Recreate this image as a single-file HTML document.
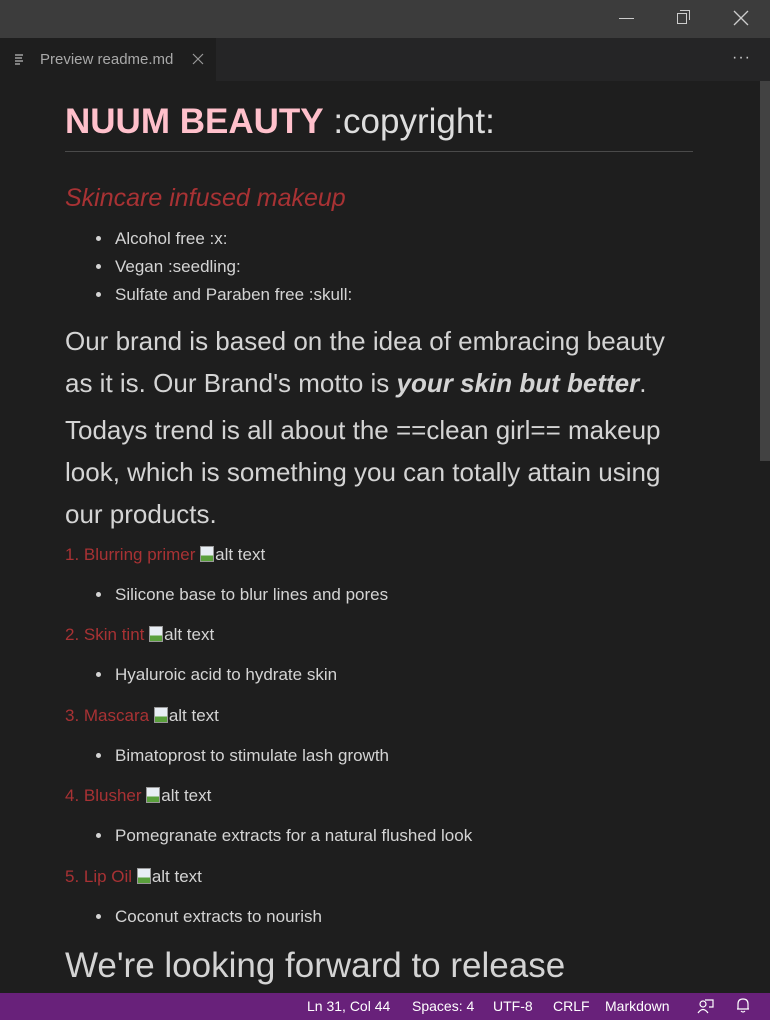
<!DOCTYPE html>
<html><head><meta charset="utf-8"><style>
body{margin:0;width:770px;height:1020px;background:#1e1e1e;overflow:hidden;position:relative;font-family:"Liberation Sans",sans-serif;color:#d4d4d4}
.a{position:absolute;white-space:nowrap}
.t{line-height:1}
.red{color:#a83234}
.dot{position:absolute;width:5px;height:5px;border-radius:50%;background:#d4d4d4}
.img{display:inline-block;width:14px;height:16px;vertical-align:-2px;margin-right:1px;background:linear-gradient(#e8eef4 60%,#5aa03c 60%);border:1px solid #999;box-sizing:border-box}
</style></head><body>
<div class="a" style="left:0;top:0;width:770px;height:38px;background:#3c3c3c"></div>
<div class="a" style="left:619px;top:18px;width:15px;height:1px;background:#ccc"></div>
<div class="a" style="left:677px;top:13px;width:10px;height:11px;border:1px solid #ccc;box-sizing:border-box"></div>
<div class="a" style="left:680px;top:10px;width:10px;height:10px;border-top:1px solid #ccc;border-right:1px solid #ccc;box-sizing:border-box"></div>
<svg class="a" style="left:733px;top:10px" width="16" height="16"><path d="M1 1L15 15M15 1L1 15" stroke="#ccc" stroke-width="1.3"/></svg>
<div class="a" style="left:0;top:38px;width:770px;height:43px;background:#252526"></div>
<div class="a" style="left:0;top:38px;width:216px;height:43px;background:#1e1e1e"></div>
<svg class="a" style="left:15px;top:54px" width="10" height="12"><path d="M0 1H8M0 4H7M0 7H8M0 10H5" stroke="#bbb" stroke-width="1.2"/></svg>
<div class="a t" style="left:40px;top:52px;font-size:15px;color:#a9a9a9">Preview readme.md</div>
<svg class="a" style="left:192px;top:53px" width="12" height="12"><path d="M1 1L11 11M11 1L1 11" stroke="#999" stroke-width="1.2"/></svg>
<div class="a t" style="left:732px;top:50px;font-size:16px;color:#ccc;letter-spacing:1px">···</div>
<div class="a" style="left:760px;top:81px;width:10px;height:380px;background:#424242"></div>

<div class="a t" style="left:65px;top:104px;font-size:35px;color:#ddd"><b style="color:#ffc0cb">NUUM BEAUTY</b> :copyright:</div>
<div class="a" style="left:65px;top:151px;width:628px;height:1px;background:#4a4a4a"></div>
<div class="a t" style="left:65px;top:186px;font-size:25px;font-style:italic"><span class="red">Skincare infused makeup</span></div>

<div class="dot" style="left:96px;top:236px"></div><div class="a t" style="left:115px;top:230px;font-size:17px">Alcohol free :x:</div>
<div class="dot" style="left:96px;top:264px"></div><div class="a t" style="left:115px;top:258px;font-size:17px">Vegan :seedling:</div>
<div class="dot" style="left:96px;top:292px"></div><div class="a t" style="left:115px;top:286px;font-size:17px">Sulfate and Paraben free :skull:</div>

<div class="a t" style="left:65px;top:328px;font-size:26px">Our brand is based on the idea of embracing beauty</div>
<div class="a t" style="left:65px;top:370px;font-size:26px">as it is. Our Brand's motto is <b><i>your skin but better</i></b>.</div>
<div class="a t" style="left:65px;top:417px;font-size:26px">Todays trend is all about the ==clean girl== makeup</div>
<div class="a t" style="left:65px;top:459px;font-size:26px">look, which is something you can totally attain using</div>
<div class="a t" style="left:65px;top:501px;font-size:26px">our products.</div>

<div class="a t" style="left:65px;top:546px;font-size:17px"><span class="red">1. Blurring primer</span> <span class="img"></span>alt text</div>
<div class="dot" style="left:96px;top:592px"></div><div class="a t" style="left:115px;top:586px;font-size:17px">Silicone base to blur lines and pores</div>
<div class="a t" style="left:65px;top:626px;font-size:17px"><span class="red">2. Skin tint</span> <span class="img"></span>alt text</div>
<div class="dot" style="left:96px;top:672px"></div><div class="a t" style="left:115px;top:666px;font-size:17px">Hyaluroic acid to hydrate skin</div>
<div class="a t" style="left:65px;top:707px;font-size:17px"><span class="red">3. Mascara</span> <span class="img"></span>alt text</div>
<div class="dot" style="left:96px;top:753px"></div><div class="a t" style="left:115px;top:747px;font-size:17px">Bimatoprost to stimulate lash growth</div>
<div class="a t" style="left:65px;top:787px;font-size:17px"><span class="red">4. Blusher</span> <span class="img"></span>alt text</div>
<div class="dot" style="left:96px;top:833px"></div><div class="a t" style="left:115px;top:827px;font-size:17px">Pomegranate extracts for a natural flushed look</div>
<div class="a t" style="left:65px;top:868px;font-size:17px"><span class="red">5. Lip Oil</span> <span class="img"></span>alt text</div>
<div class="dot" style="left:96px;top:914px"></div><div class="a t" style="left:115px;top:908px;font-size:17px">Coconut extracts to nourish</div>

<div class="a t" style="left:65px;top:948px;font-size:35px">We're looking forward to release</div>

<div class="a" style="left:0;top:993px;width:770px;height:27px;background:#68217a"></div>
<div class="a t" style="left:307px;top:999px;font-size:14px;color:#fff">Ln 31, Col 44</div>
<div class="a t" style="left:412px;top:999px;font-size:14px;color:#fff">Spaces: 4</div>
<div class="a t" style="left:493px;top:999px;font-size:14px;color:#fff">UTF-8</div>
<div class="a t" style="left:553px;top:999px;font-size:14px;color:#fff">CRLF</div>
<div class="a t" style="left:605px;top:999px;font-size:14px;color:#fff">Markdown</div>
<svg class="a" style="left:697px;top:998px" width="18" height="16"><circle cx="6" cy="6" r="3" fill="none" stroke="#fff" stroke-width="1.2"/><path d="M1 15Q6 8 11 15M8 2H16V9H12" fill="none" stroke="#fff" stroke-width="1.2"/></svg>
<svg class="a" style="left:735px;top:997px" width="16" height="17"><path d="M3 12V7Q3 2 8 2Q13 2 13 7V12H3ZM2 12H14M6 14Q8 16 10 14" fill="none" stroke="#fff" stroke-width="1.2"/></svg>
</body></html>
